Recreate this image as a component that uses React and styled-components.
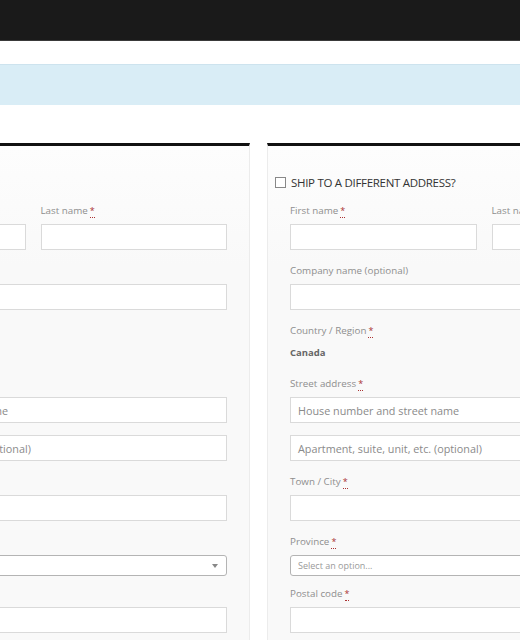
import React from 'react'
import styled, { createGlobalStyle } from 'styled-components'

const Global = createGlobalStyle`
  html, body {
    margin: 0;
    padding: 0;
    background: #fff;
    overflow: hidden;
    font-family: "Open Sans", "Liberation Sans", sans-serif;
  }
`

const Page = styled.div`
  width: 520px;
  height: 640px;
  overflow: hidden;
`

const TopBar = styled.header`
  height: 40px;
  background: #1a1a1a;
  border-bottom: 1px solid #3a3a3a;
`

const Notice = styled.div`
  margin-top: 23px;
  height: 40px;
  background: #d9edf6;
  border-top: 1px solid #cde3ee;
`

const Columns = styled.div`
  margin: 38px 0 0 -184px;
  display: grid;
  grid-template-columns: 434px 434px;
  column-gap: 17px;
`

const Column = styled.section`
  border-top: 3px solid #111;
  border-left: 1px solid #ececec;
  border-right: 1px solid #ececec;
  background: linear-gradient(#fdfdfd, #f9f9f9 120px);
  padding: 28px 22px 0;
  height: 520px;
  box-sizing: border-box;
`

const Heading = styled.h3`
  margin: 0 0 14px -15px;
  height: 16px;
  display: flex;
  align-items: center;
  gap: 5px;
  font-size: 11.5px;
  font-weight: 400;
  letter-spacing: -0.3px;
  color: #333;
  text-transform: uppercase;
`

const Check = styled.span`
  width: 9px;
  height: 9px;
  border: 1px solid #888;
  background: #fff;
`

const Row = styled.div`
  display: grid;
  grid-template-columns: 1fr 1fr;
  column-gap: 15px;
`

const Field = styled.div`
  margin-bottom: ${p => p.$mb ?? 14}px;
`

const Label = styled.label`
  display: block;
  height: 14px;
  line-height: 14px;
  margin-bottom: 6px;
  font-size: 9.8px;
  color: #8e8e8e;
`

const Req = styled.abbr`
  color: #a33;
  text-decoration: none;
  border-bottom: 1px dotted #a33;
  margin-left: 2px;
  font-size: 9px;
`

const Input = styled.div`
  height: 24px;
  border: 1px solid #dadada;
  background: #fff;
  padding: 0 7px;
  display: flex;
  align-items: center;
  font-size: 10.8px;
  color: #8a8a8a;
  white-space: nowrap;
  overflow: hidden;
  & + & {
    margin-top: 12px;
  }
`

const Select = styled.div`
  height: 19px;
  margin-top: 5px;
  border: 1px solid #b4b4b4;
  border-radius: 3px;
  background: #fff;
  padding: 0 8px 0 7px;
  display: flex;
  align-items: center;
  justify-content: space-between;
  font-size: 9px;
  color: #9a9a9a;
  &::after {
    content: '';
    border-left: 3.5px solid transparent;
    border-right: 3.5px solid transparent;
    border-top: 4px solid #888;
  }
`

const Value = styled.div`
  height: 18px;
  line-height: 18px;
  margin-top: 1px;
  font-size: 9.5px;
  font-weight: 700;
  color: #666;
`

function Lbl({ children, req }) {
  return (
    <Label>
      {children}
      {req && <Req title="required">*</Req>}
    </Label>
  )
}

function AddressFields({ title, checkbox }) {
  return (
    <Column>
      <Heading>
        {checkbox && <Check />}
        {title}
      </Heading>
      <Row>
        <Field>
          <Lbl req>First name</Lbl>
          <Input />
        </Field>
        <Field>
          <Lbl req>Last name</Lbl>
          <Input />
        </Field>
      </Row>
      <Field>
        <Lbl>Company name (optional)</Lbl>
        <Input />
      </Field>
      <Field $mb={15}>
        <Lbl req>Country / Region</Lbl>
        <Value>Canada</Value>
      </Field>
      <Field>
        <Lbl req>Street address</Lbl>
        <Input>House number and street name</Input>
        <Input>Apartment, suite, unit, etc. (optional)</Input>
      </Field>
      <Field>
        <Lbl req>Town / City</Lbl>
        <Input />
      </Field>
      <Field $mb={11}>
        <Lbl req>Province</Lbl>
        <Select>Select an option...</Select>
      </Field>
      <Field>
        <Lbl req>Postal code</Lbl>
        <Input />
      </Field>
    </Column>
  )
}

export default function App() {
  return (
    <Page>
      <Global />
      <TopBar />
      <Notice />
      <Columns>
        <AddressFields title="Billing details" />
        <AddressFields title="Ship to a different address?" checkbox />
      </Columns>
    </Page>
  )
}
